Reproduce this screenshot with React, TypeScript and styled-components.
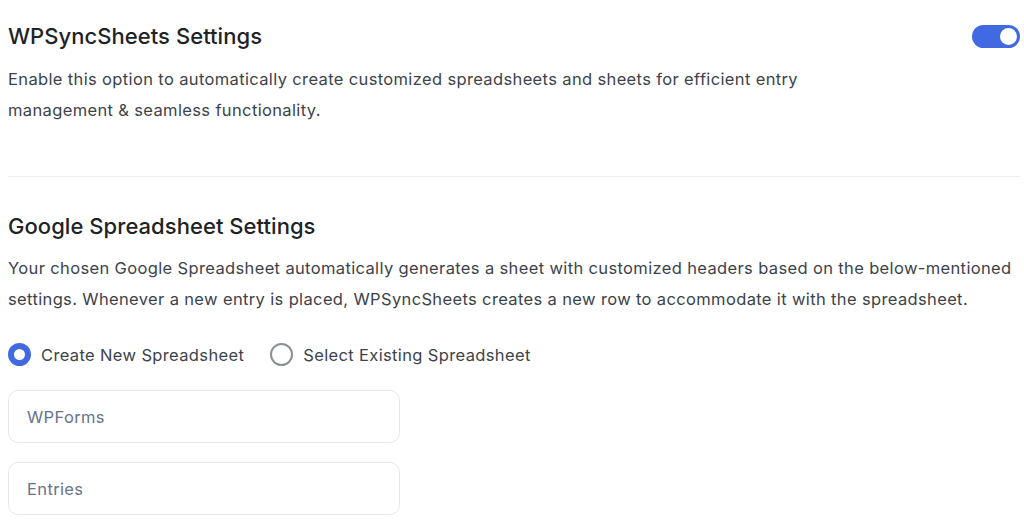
import React, { useState } from 'react';
import styled, { createGlobalStyle } from 'styled-components';

const GlobalStyle = createGlobalStyle`
  * { box-sizing: border-box; }
  body {
    margin: 0;
    background: #ffffff;
    font-family: Inter, "Noto Sans", sans-serif;
  }
`;

const Page = styled.div`
  padding: 22px 4px 0 8px;
  width: 1024px;
`;

const Section = styled.section`
  display: flex;
  flex-direction: column;
`;

const HeaderRow = styled.div`
  display: flex;
  justify-content: space-between;
  align-items: center;
`;

const Title = styled.h2`
  margin: 0;
  font-size: 22px;
  line-height: 28px;
  font-weight: 500;
  color: #1d2327;
  letter-spacing: 0.05px;
`;

const Description = styled.p`
  margin: 0;
  font-size: 16.5px;
  line-height: 31px;
  color: #3c434a;
  letter-spacing: 0.36px;
`;

const Divider = styled.hr`
  border: none;
  border-top: 1px solid #eceef2;
  margin: 0;
`;

const Toggle = styled.button<{ $on: boolean }>`
  position: relative;
  width: 48px;
  height: 23px;
  border-radius: 12px;
  border: none;
  padding: 0;
  cursor: pointer;
  background: ${p => (p.$on ? '#4169e1' : '#c3c4c7')};

  &::after {
    content: '';
    position: absolute;
    top: 3px;
    left: ${p => (p.$on ? '28px' : '3px')};
    width: 17px;
    height: 17px;
    border-radius: 50%;
    background: #ffffff;
  }
`;

const RadioGroup = styled.div`
  display: flex;
  align-items: center;
  gap: 26px;
`;

const RadioLabel = styled.label`
  display: flex;
  align-items: center;
  gap: 10px;
  font-size: 16.5px;
  letter-spacing: 0.36px;
  color: #3c434a;
  cursor: pointer;
`;

const RadioDot = styled.span<{ $checked: boolean }>`
  width: 23px;
  height: 23px;
  border-radius: 50%;
  border: ${p => (p.$checked ? '6px solid #4169e1' : '2px solid #8c8f94')};
  background: #ffffff;
`;

const Fields = styled.div`
  display: flex;
  flex-direction: column;
  gap: 19px;
`;

const TextInput = styled.input`
  width: 392px;
  height: 53px;
  border: 1px solid #e3e7ee;
  border-radius: 10px;
  padding: 0 18px;
  font-family: Inter, "Noto Sans", sans-serif;
  font-size: 16.5px;
  letter-spacing: 0.36px;
  color: #1d2327;
  outline: none;

  &::placeholder {
    color: #68738a;
  }
`;

export default function App() {
  const [enabled, setEnabled] = useState(true);
  const [mode, setMode] = useState<'new' | 'existing'>('new');

  return (
    <>
      <GlobalStyle />
      <Page>
        <Section>
          <HeaderRow>
            <Title>WPSyncSheets Settings</Title>
            <Toggle $on={enabled} onClick={() => setEnabled(!enabled)} aria-label="toggle" />
          </HeaderRow>
          <Description style={{ marginTop: 14 }}>
            Enable this option to automatically create customized spreadsheets and sheets for efficient entry
            <br />
            management &amp; seamless functionality.
          </Description>
        </Section>

        <Divider style={{ marginTop: 50 }} />

        <Section style={{ marginTop: 35 }}>
          <Title>Google Spreadsheet Settings</Title>
          <Description style={{ marginTop: 13 }}>
            Your chosen Google Spreadsheet automatically generates a sheet with customized headers based on the below-mentioned
            settings. Whenever a new entry is placed, WPSyncSheets creates a new row to accommodate it with the spreadsheet.
          </Description>
          <RadioGroup style={{ marginTop: 28 }}>
            <RadioLabel onClick={() => setMode('new')}>
              <RadioDot $checked={mode === 'new'} />
              Create New Spreadsheet
            </RadioLabel>
            <RadioLabel onClick={() => setMode('existing')}>
              <RadioDot $checked={mode === 'existing'} />
              Select Existing Spreadsheet
            </RadioLabel>
          </RadioGroup>
          <Fields style={{ marginTop: 24 }}>
            <TextInput placeholder="WPForms" />
            <TextInput placeholder="Entries" />
          </Fields>
        </Section>
      </Page>
    </>
  );
}
